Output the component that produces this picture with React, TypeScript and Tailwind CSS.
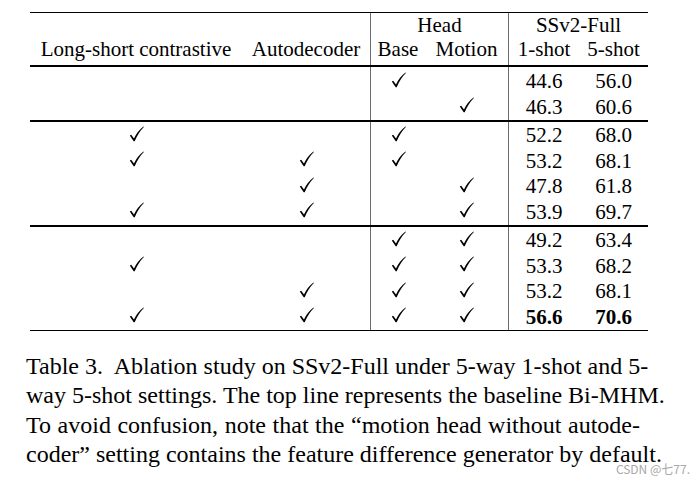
import React from 'react';

type Cell = boolean | string;

interface RowData {
  lsc: boolean;
  ad: boolean;
  base: boolean;
  motion: boolean;
  one: string;
  five: string;
  bold?: boolean;
}

const groups: RowData[][] = [
  [
    { lsc: false, ad: false, base: true, motion: false, one: '44.6', five: '56.0' },
    { lsc: false, ad: false, base: false, motion: true, one: '46.3', five: '60.6' },
  ],
  [
    { lsc: true, ad: false, base: true, motion: false, one: '52.2', five: '68.0' },
    { lsc: true, ad: true, base: true, motion: false, one: '53.2', five: '68.1' },
    { lsc: false, ad: true, base: false, motion: true, one: '47.8', five: '61.8' },
    { lsc: true, ad: true, base: false, motion: true, one: '53.9', five: '69.7' },
  ],
  [
    { lsc: false, ad: false, base: true, motion: true, one: '49.2', five: '63.4' },
    { lsc: true, ad: false, base: true, motion: true, one: '53.3', five: '68.2' },
    { lsc: false, ad: true, base: true, motion: true, one: '53.2', five: '68.1' },
    { lsc: true, ad: true, base: true, motion: true, one: '56.6', five: '70.6', bold: true },
  ],
];

// LaTeX-style \checkmark
function Check() {
  return (
    <svg width="15" height="16" viewBox="0 0 15 16" className="block">
      <path
        d="M0.8 9.6 L2.2 8.7 L5 12.4 Q8.5 5 14.5 0.5 L14.9 1.1 Q9.6 6.2 5.7 15.3 L4.7 15.3 Z"
        fill="#000"
      />
    </svg>
  );
}

function Mark({ on }: { on: Cell }) {
  if (!on) return null;
  return (
    <span className="-mt-[4px]">
      <Check />
    </span>
  );
}

function DataRow({ row }: { row: RowData }) {
  const num = row.bold ? 'font-bold' : '';
  return (
    <div className="flex h-[25.5px] leading-[24px]">
      <div className="w-[212px] flex items-center justify-center"><Mark on={row.lsc} /></div>
      <div className="w-[128px] flex items-center justify-center"><Mark on={row.ad} /></div>
      <div className="w-[55px] border-l border-[#6b6b6b] flex items-center justify-center"><Mark on={row.base} /></div>
      <div className="w-[83px] flex items-center justify-center"><Mark on={row.motion} /></div>
      <div className={`w-[71px] border-l border-[#6b6b6b] text-center ${num}`}>{row.one}</div>
      <div className={`w-[69px] text-center ${num}`}>{row.five}</div>
    </div>
  );
}

function Group({ rows, pad }: { rows: RowData[]; pad: string }) {
  return (
    <div className="flex flex-col">
      <div className={`flex ${pad}`}>
        <div className="w-[340px]" />
        <div className="w-[138px] border-l border-[#6b6b6b]" />
        <div className="w-[140px] border-l border-[#6b6b6b]" />
      </div>
      {rows.map((r, i) => (
        <DataRow key={i} row={r} />
      ))}
    </div>
  );
}

export default function App() {
  return (
    <div className="relative w-[699px] h-[485px] bg-white text-black font-['Liberation_Serif'] overflow-hidden">
      <div className="ml-[30px] pt-[12px] w-[618px] text-[21px]">
        <div className="h-px bg-black" />

        {/* header */}
        <div className="flex h-[24px] leading-[24px]">
          <div className="w-[340px]" />
          <div className="w-[138px] border-l border-[#6b6b6b] text-center">Head</div>
          <div className="w-[140px] border-l border-[#6b6b6b] text-center">SSv2-Full</div>
        </div>
        <div className="flex h-[28px] leading-[25px]">
          <div className="w-[212px] text-center">Long-short contrastive</div>
          <div className="w-[128px] text-center">Autodecoder</div>
          <div className="w-[55px] border-l border-[#6b6b6b] text-center">Base</div>
          <div className="w-[83px] text-center">Motion</div>
          <div className="w-[71px] border-l border-[#6b6b6b] text-center">1-shot</div>
          <div className="w-[69px] text-center">5-shot</div>
        </div>
        <div className="h-[2px] bg-black" />

        <Group rows={groups[0]} pad="h-[2px]" />
        <div className="h-[2px] bg-black" />
        <Group rows={groups[1]} pad="h-px" />
        <div className="h-[2px] bg-black" />
        <Group rows={groups[2]} pad="h-px" />
        <div className="h-px bg-black" />
      </div>

      {/* caption */}
      <div className="ml-[26px] mt-[21px] w-[614px] text-[24px] leading-[29.4px]">
        <div className="whitespace-nowrap text-justify [text-align-last:justify]">Table 3.&nbsp; Ablation study on SSv2-Full under 5-way 1-shot and 5-</div>
        <div className="whitespace-nowrap text-justify [text-align-last:justify]">way 5-shot settings. The top line represents the baseline Bi-MHM.</div>
        <div className="whitespace-nowrap text-justify [text-align-last:justify]">To avoid confusion, note that the “motion head without autode-</div>
        <div className="whitespace-nowrap">coder” setting contains the feature difference generator by default.</div>
      </div>

      <div className="absolute right-[9px] top-[462px] text-[12px] leading-[14px] text-[#a8a8a8] font-['Noto_Sans_CJK_SC']">
        CSDN @七77.
      </div>
    </div>
  );
}
